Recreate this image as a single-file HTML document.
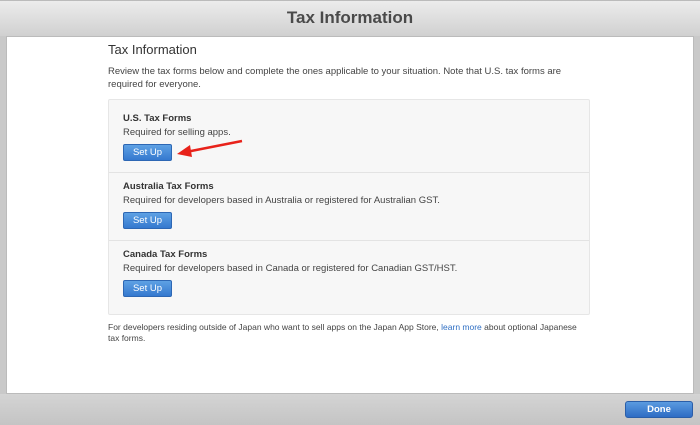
<!DOCTYPE html>
<html><head><style>
*{margin:0;padding:0;box-sizing:border-box}
body{width:700px;height:425px;overflow:hidden;font-family:"Liberation Sans",sans-serif;background:#c9c9c9;position:relative;color:#333}
.hdr{position:absolute;left:0;top:0;width:700px;height:36px;background:linear-gradient(#ececec,#d0d0d0);border-top:1px solid #bbb}
.hdr h1{position:absolute;left:0;right:0;top:7px;text-align:center;font-size:17px;font-weight:bold;color:#4a4a4a}
.panel{position:absolute;left:6px;top:36px;width:688px;height:358px;background:#fff;border:1px solid #bbb}
.bot{position:absolute;left:0;top:394px;width:700px;height:31px;background:linear-gradient(#d4d4d4,#c4c4c4)}
.t{position:absolute;left:108px;top:42px;font-size:13px;color:#333}
.p{position:absolute;left:108px;top:65px;width:490px;font-size:9.5px;line-height:13px;color:#444}
.box{position:absolute;left:108px;top:99px;width:482px;height:216px;background:#f7f7f7;border:1px solid #e6e6e6;border-radius:2px}
.sec{position:absolute;left:0;width:480px;border-top:1px solid #e3e3e3}
.sec h3{position:absolute;left:14px;font-size:9.5px;font-weight:bold;color:#333}
.sec p{position:absolute;left:14px;font-size:9.5px;color:#444}
.btn{position:absolute;left:14px;width:49px;height:17px;background:linear-gradient(#5ea1e4,#3579cf);border:1px solid #2d67b4;border-radius:2px;color:#fff;font-size:9.5px;text-align:center;line-height:15px}
.f{position:absolute;left:108px;top:322px;width:476px;font-size:8.5px;line-height:11px;color:#444}
.f a{color:#2f6fc4;text-decoration:none}
.done{position:absolute;left:625px;top:401px;width:68px;height:17px;background:linear-gradient(#5a9be0,#2e6cc4);border:1px solid #2a5ea8;border-radius:3px;color:#fff;font-size:9.5px;font-weight:bold;text-align:center;line-height:15px}
</style></head><body>
<div class="hdr"><h1>Tax Information</h1></div>
<div class="panel"></div>
<div class="bot"></div>
<div class="t">Tax Information</div>
<div class="p">Review the tax forms below and complete the ones applicable to your situation. Note that U.S. tax forms are required for everyone.</div>
<div class="box">
 <div class="sec" style="top:0;height:73px;border-top:none">
  <h3 style="top:13px">U.S. Tax Forms</h3><p style="top:27px">Required for selling apps.</p><div class="btn" style="top:44px">Set Up</div>
 </div>
 <div class="sec" style="top:72px;height:68px">
  <h3 style="top:8px">Australia Tax Forms</h3><p style="top:22px">Required for developers based in Australia or registered for Australian GST.</p><div class="btn" style="top:39px">Set Up</div>
 </div>
 <div class="sec" style="top:140px;height:75px">
  <h3 style="top:8px">Canada Tax Forms</h3><p style="top:22px">Required for developers based in Canada or registered for Canadian GST/HST.</p><div class="btn" style="top:39px">Set Up</div>
 </div>
</div>
<svg style="position:absolute;left:172px;top:138px" width="72" height="22"><line x1="70" y1="3" x2="14" y2="14" stroke="#e8221a" stroke-width="2.5"/><polygon points="5,16 18,7 20,19" fill="#e8221a"/></svg>
<div class="f">For developers residing outside of Japan who want to sell apps on the Japan App Store, <a>learn more</a> about optional Japanese<br>tax forms.</div>
<div class="done">Done</div>
</body></html>
